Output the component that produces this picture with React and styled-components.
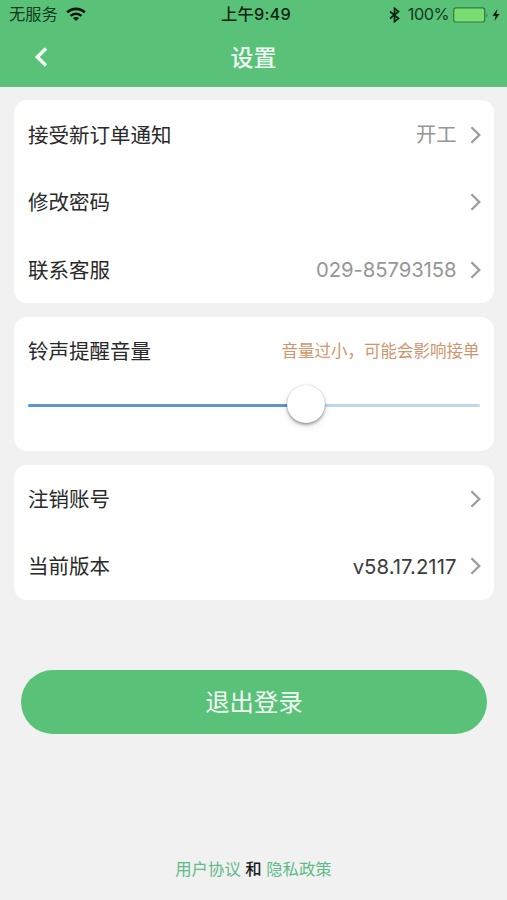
import React, { useState } from "react";
import styled, { createGlobalStyle } from "styled-components";

const GREEN = "#5ac178";

const GlobalStyle = createGlobalStyle`
  * { box-sizing: border-box; }
  body {
    margin: 0;
    background: #f1f1f1;
    font-family: Inter, "Noto Sans CJK SC", sans-serif;
    color: #292929;
  }
`;

const Screen = styled.div`
  width: 507px;
  height: 900px;
  display: flex;
  flex-direction: column;
  overflow: hidden;
  background: #f1f1f1;
`;

const Header = styled.header`
  height: 87px;
  flex: none;
  background: ${GREEN};
`;

const StatusBar = styled.div`
  height: 29px;
  display: grid;
  grid-template-columns: 1fr auto 1fr;
  align-items: center;
  padding: 0 6px 0 9px;
  font-size: 16.3px;
  line-height: 29px;
  color: #123a1e;
`;

const StatusGroup = styled.div`
  display: flex;
  align-items: center;
  justify-content: ${(p) => (p.$end ? "flex-end" : "flex-start")};
`;

const Clock = styled.span`
  padding-left: 2px;
  font-weight: 500;
  letter-spacing: 0.2px;
  color: #0d2413;
`;

const WifiIcon = styled.svg`
  margin-left: 8px;
`;

const Percent = styled.span`
  margin: 0 4px 0 8px;
  letter-spacing: -0.5px;
`;

const BoltIcon = styled.svg`
  margin-left: 1px;
`;

const NavBar = styled.div`
  height: 58px;
  display: grid;
  grid-template-columns: 60px 1fr 60px;
  align-items: center;
`;

const BackButton = styled.button`
  height: 40px;
  padding: 0 0 2px 34px;
  border: 0;
  background: none;
  display: flex;
  align-items: center;
`;

const Title = styled.h1`
  margin: 0;
  text-align: center;
  font-size: 23px;
  line-height: 58px;
  font-weight: 500;
  color: #effff3;
`;

const Cards = styled.main`
  display: flex;
  flex-direction: column;
  gap: 14px;
  padding: 13px 13px 0 14px;
`;

const Card = styled.section`
  height: ${(p) => p.$height}px;
  border-radius: 13px;
  background: #fff;
  padding: ${(p) => p.$top || 0}px 14px 0;
`;

const Row = styled.div`
  height: 67.5px;
  display: flex;
  align-items: center;
`;

const Label = styled.span`
  flex: 1;
  padding-top: 2px;
  font-size: 20.5px;
  line-height: 30px;
  color: #292929;
`;

const Value = styled.span`
  padding-top: 1px;
  font-size: 20.3px;
  line-height: 30px;
  letter-spacing: ${(p) => p.$spacing || 0}px;
  color: ${(p) => (p.$dark ? "#3c3c3c" : "#969696")};
`;

const Chevron = styled.svg`
  flex: none;
  margin: 0 -0.5px 0 13px;
`;

const Warning = styled.span`
  padding-right: 0.5px;
  font-size: 16.5px;
  line-height: 24px;
  color: #d0956d;
`;

const Slider = styled.div`
  height: 41px;
  display: grid;
  align-items: center;
  position: relative;
`;

const Track = styled.div`
  height: 3px;
  border-radius: 2px;
  background: #bfd7ec;
`;

const Fill = styled.div`
  height: 3px;
  border-radius: 2px;
  background: #5f93cd;
`;

const Thumb = styled.div`
  position: absolute;
  top: 0;
  width: 38px;
  height: 38px;
  margin-left: -19px;
  border-radius: 50%;
  background: #fff;
  box-shadow: 0 2px 3px rgba(0, 0, 0, 0.32), 0 3px 9px rgba(0, 0, 0, 0.1), 0 0 1px rgba(0, 0, 0, 0.25);
`;

const LogoutButton = styled.button`
  flex: none;
  height: 64.5px;
  margin: 70px 20px 0 21px;
  border: 0;
  border-radius: 33px;
  background: ${GREEN};
  color: #f0fff4;
  font: inherit;
  font-size: 24.4px;
  line-height: 64.5px;
  padding: 0;
`;

const Footer = styled.footer`
  margin-top: auto;
  padding-bottom: 19px;
  display: flex;
  justify-content: center;
  gap: 4.5px;
  font-size: 16.4px;
  line-height: 24px;
  color: #1c1c1c;
`;

const And = styled.span`
  font-weight: 500;
`;

const PolicyLink = styled.a`
  color: #62bb88;
`;

function Arrow() {
  return (
    <Chevron width="11" height="18" viewBox="0 0 11 18" fill="none">
      <path d="M1.4 1.3 L9.3 9 L1.4 16.7" stroke="#9c9c9c" strokeWidth="2.3" />
    </Chevron>
  );
}

function SettingRow({ label, value, dark, spacing }) {
  return (
    <Row>
      <Label>{label}</Label>
      {value && <Value $dark={dark} $spacing={spacing}>{value}</Value>}
      <Arrow />
    </Row>
  );
}

export default function App() {
  const [volume] = useState(61.6);
  return (
    <>
      <GlobalStyle />
      <Screen>
        <Header>
          <StatusBar>
            <StatusGroup>
              <span>无服务</span>
              <WifiIcon width="20" height="15" viewBox="0 0 20 15" fill="none" stroke="#08150b">
                <path d="M1.2 5.4 C6.1.7 13.9.7 18.8 5.4" strokeWidth="2.7" />
                <path d="M4.5 8.9 C7.6 6 12.4 6 15.5 8.9" strokeWidth="2.5" />
                <path d="M10 14 L6.9 11.1 C8.7 9.6 11.3 9.6 13.1 11.1 Z" fill="#08150b" stroke="none" />
              </WifiIcon>
            </StatusGroup>
            <Clock>上午9:49</Clock>
            <StatusGroup $end>
              <svg width="11" height="16" viewBox="0 0 11 16" fill="none" stroke="#0b2412" strokeWidth="1.7">
                <path d="M1 4.5 L9.5 11.5 L5.5 14.6 V1.4 L9.5 4.5 L1 11.5" />
              </svg>
              <Percent>100%</Percent>
              <svg width="37" height="16" viewBox="0 0 37 16">
                <rect x=".7" y=".8" width="31" height="14.2" rx="2.2" fill="#7add72" stroke="#2e7a42" strokeWidth="1.2" />
                <path d="M33.5 5.7 Q35.5 8 33.5 10.3 Z" fill="#2e7a42" />
              </svg>
              <BoltIcon width="10" height="14" viewBox="0 0 10 14">
                <path d="M6.5 1 L1.5 7.8 H4.7 L3.5 13 L8.5 6 H5.3 Z" fill="#08150b" />
              </BoltIcon>
            </StatusGroup>
          </StatusBar>
          <NavBar>
            <BackButton aria-label="返回">
              <svg width="14" height="20" viewBox="0 0 14 20" fill="none">
                <path d="M12 1.4 L3.3 10 L12 18.6" stroke="#f0fff4" strokeWidth="3.5" />
              </svg>
            </BackButton>
            <Title>设置</Title>
          </NavBar>
        </Header>
        <Cards>
          <Card $height={202.5} $top={1}>
            <SettingRow label="接受新订单通知" value="开工" />
            <SettingRow label="修改密码" />
            <SettingRow label="联系客服" value="029-85793158" spacing={-0.08} />
          </Card>
          <Card $height={134.5} $top={1}>
            <Row>
              <Label>铃声提醒音量</Label>
              <Warning>音量过小，可能会影响接单</Warning>
            </Row>
            <Slider>
              <Track>
                <Fill style={{ width: `${volume}%` }} />
              </Track>
              <Thumb style={{ left: `${volume}%` }} />
            </Slider>
          </Card>
          <Card $height={134.5}>
            <SettingRow label="注销账号" />
            <SettingRow label="当前版本" value="v58.17.2117" dark spacing={0.05} />
          </Card>
        </Cards>
        <LogoutButton>退出登录</LogoutButton>
        <Footer>
          <PolicyLink>用户协议</PolicyLink>
          <And>和</And>
          <PolicyLink>隐私政策</PolicyLink>
        </Footer>
      </Screen>
    </>
  );
}
